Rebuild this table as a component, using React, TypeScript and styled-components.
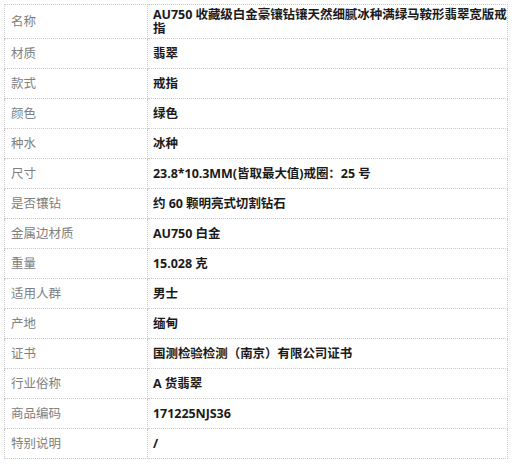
import React from "react";
import styled, { createGlobalStyle } from "styled-components";

const GlobalStyle = createGlobalStyle`
  body {
    margin: 0;
    background: #fff;
    font-family: "Open Sans", "Noto Sans CJK SC", sans-serif;
  }
`;

const rows: [string, string][] = [
  ["名称", "AU750 收藏级白金豪镶钻镶天然细腻冰种满绿马鞍形翡翠宽版戒指"],
  ["材质", "翡翠"],
  ["款式", "戒指"],
  ["颜色", "绿色"],
  ["种水", "冰种"],
  ["尺寸", "23.8*10.3MM(皆取最大值)戒圈：25 号"],
  ["是否镶钻", "约 60 颗明亮式切割钻石"],
  ["金属边材质", "AU750 白金"],
  ["重量", "15.028 克"],
  ["适用人群", "男士"],
  ["产地", "缅甸"],
  ["证书", "国测检验检测（南京）有限公司证书"],
  ["行业俗称", "A 货翡翠"],
  ["商品编码", "171225NJS36"],
  ["特别说明", "/"],
];

const Page = styled.div`
  padding: 4px;
`;

const SpecTable = styled.table`
  width: 504px;
  border-collapse: collapse;
  table-layout: fixed;
  border: 1px dotted #c9c9c9;
`;

const Row = styled.tr<{ $tall?: boolean }>`
  height: ${(p) => (p.$tall ? "34px" : "30px")};
`;

const Label = styled.td`
  width: 130px;
  padding: 0 6px;
  border: 1px dotted #c9c9c9;
  color: #808080;
  font-size: 12.5px;
  line-height: 14px;
  vertical-align: middle;
`;

const Value = styled.td`
  padding: 0 0 0 5px;
  border: 1px dotted #c9c9c9;
  color: #1a1a1a;
  font-weight: 700;
  font-size: 12.5px;
  line-height: 14px;
  letter-spacing: -0.05px;
  vertical-align: middle;
`;

const App: React.FC = () => {
  return (
    <Page>
      <GlobalStyle />
      <SpecTable>
        <tbody>
          {rows.map(([label, value], i) => (
            <Row key={label} $tall={i === 0}>
              <Label>{label}</Label>
              <Value>{value}</Value>
            </Row>
          ))}
        </tbody>
      </SpecTable>
    </Page>
  );
};

export default App;
